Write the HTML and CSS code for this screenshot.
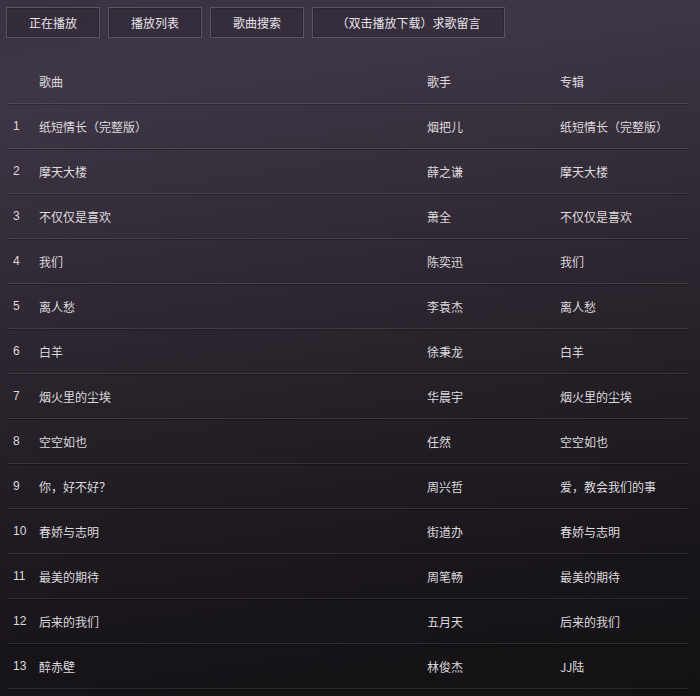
FILE: index.html
```html
<!DOCTYPE html>
<html>
<head>
<meta charset="utf-8">
<link rel="stylesheet" href="styles.css">
</head>
<body>
<div class="page">
  <div class="toolbar">
    <div class="btn">正在播放</div>
    <div class="btn">播放列表</div>
    <div class="btn">歌曲搜索</div>
    <div class="btn wide">（双击播放下载）求歌留言</div>
  </div>
  <div class="table">
    <div class="row head"><span class="num"></span><span class="song">歌曲</span><span class="singer">歌手</span><span class="album">专辑</span></div>
    <div class="row"><span class="num">1</span><span class="song">纸短情长（完整版）</span><span class="singer">烟把儿</span><span class="album">纸短情长（完整版）</span></div>
    <div class="row"><span class="num">2</span><span class="song">摩天大楼</span><span class="singer">薛之谦</span><span class="album">摩天大楼</span></div>
    <div class="row"><span class="num">3</span><span class="song">不仅仅是喜欢</span><span class="singer">萧全</span><span class="album">不仅仅是喜欢</span></div>
    <div class="row"><span class="num">4</span><span class="song">我们</span><span class="singer">陈奕迅</span><span class="album">我们</span></div>
    <div class="row"><span class="num">5</span><span class="song">离人愁</span><span class="singer">李袁杰</span><span class="album">离人愁</span></div>
    <div class="row"><span class="num">6</span><span class="song">白羊</span><span class="singer">徐秉龙</span><span class="album">白羊</span></div>
    <div class="row"><span class="num">7</span><span class="song">烟火里的尘埃</span><span class="singer">华晨宇</span><span class="album">烟火里的尘埃</span></div>
    <div class="row"><span class="num">8</span><span class="song">空空如也</span><span class="singer">任然</span><span class="album">空空如也</span></div>
    <div class="row"><span class="num">9</span><span class="song">你，好不好？</span><span class="singer">周兴哲</span><span class="album">爱，教会我们的事</span></div>
    <div class="row"><span class="num">10</span><span class="song">春娇与志明</span><span class="singer">街道办</span><span class="album">春娇与志明</span></div>
    <div class="row"><span class="num">11</span><span class="song">最美的期待</span><span class="singer">周笔畅</span><span class="album">最美的期待</span></div>
    <div class="row"><span class="num">12</span><span class="song">后来的我们</span><span class="singer">五月天</span><span class="album">后来的我们</span></div>
    <div class="row"><span class="num">13</span><span class="song">醉赤壁</span><span class="singer">林俊杰</span><span class="album">JJ陆</span></div>
  </div>
</div>
</body>
</html>
```
FILE: styles.css
```css
html, body {
  margin: 0;
  padding: 0;
  height: 100%;
}
body {
  background: linear-gradient(172deg, #3b3241 0%, #3f3646 12%, #322a36 35%, #231e25 60%, #18151a 82%, #131113 100%);
  font-family: "Microsoft YaHei", "Noto Sans CJK SC", "Liberation Sans", sans-serif;
  font-size: 12px;
  color: #dcdadd;
  overflow: hidden;
}
.page {
  width: 700px;
  height: 696px;
}
.toolbar {
  display: flex;
  gap: 8px;
  padding: 7px 6px 0;
}
.btn {
  width: 92px;
  height: 29px;
  border: 1px solid #5b5262;
  background: rgba(30, 24, 34, 0.25);
  box-shadow: inset 0 0 0 1px rgba(0, 0, 0, 0.15);
  display: flex;
  align-items: center;
  justify-content: center;
  color: #e6e3e8;
  font-size: 12px;
}
.btn.wide {
  width: 191px;
}
.table {
  margin: 21px 12px 0 8px;
}
.row {
  display: flex;
  align-items: center;
  height: 44px;
  border-bottom: 1px solid rgba(255, 255, 255, 0.1);
  box-shadow: 0 1px 0 rgba(0, 0, 0, 0.25);
}
.num {
  width: 26px;
  padding-left: 5px;
  font-family: "Liberation Sans", "DejaVu Sans", sans-serif;
}
.song {
  width: 388px;
}
.singer {
  width: 133px;
}
.album {
  flex: 1;
}
```
